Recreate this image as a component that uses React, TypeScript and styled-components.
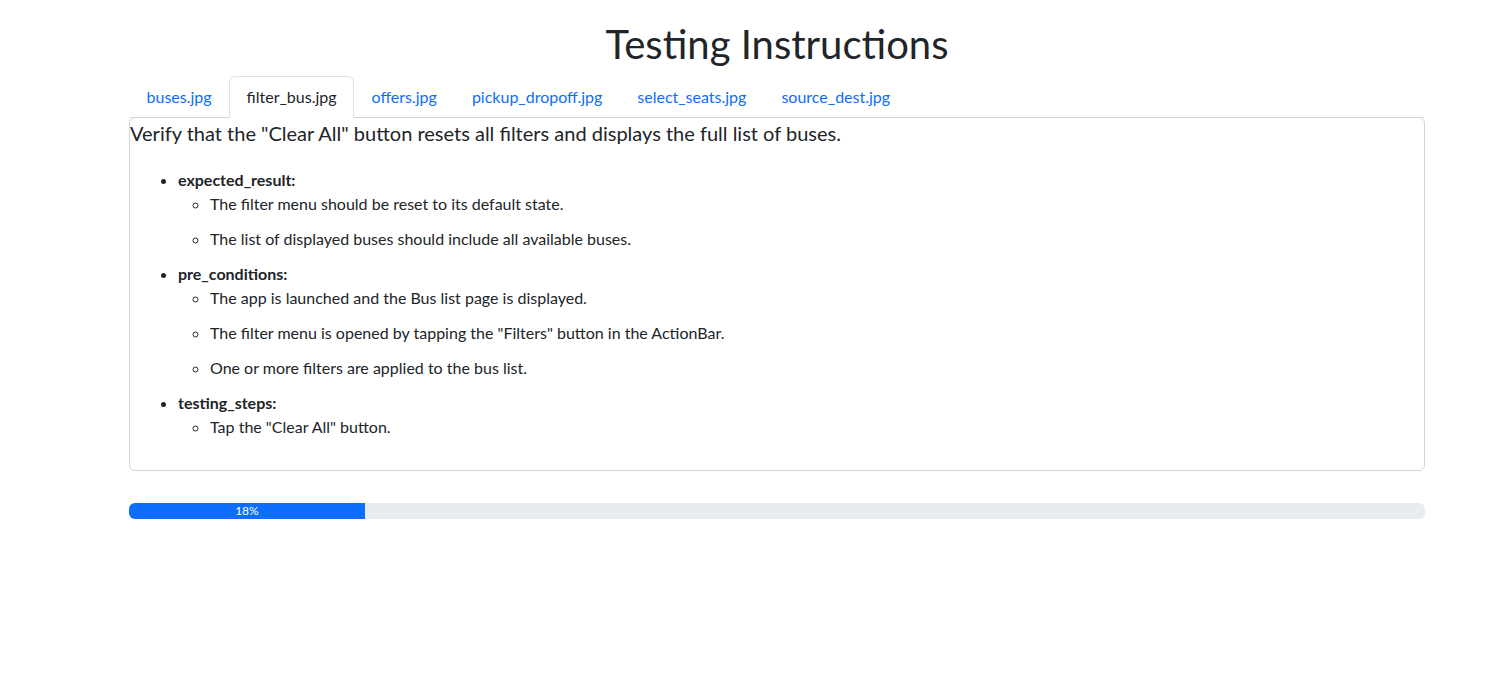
import React from "react";
import styled, { createGlobalStyle } from "styled-components";

const GlobalStyle = createGlobalStyle`
  body {
    margin: 0;
    background: #fff;
    color: #212529;
    font-family: Lato, "Noto Sans", sans-serif;
    font-size: 16px;
    line-height: 1.5;
  }
`;

const Container = styled.div`
  width: 1296px;
  margin-left: 129px;
`;

const Title = styled.h1`
  margin: 20px 0 8px;
  text-align: center;
  font-size: 40px;
  font-weight: 400;
  line-height: 1.2;
`;

const Tabs = styled.ul`
  display: flex;
  list-style: none;
  margin: 0;
  padding: 0;
  border-bottom: 1px solid #dee2e6;
`;

const Tab = styled.li<{ $active?: boolean }>`
  margin-bottom: -1px;
  padding: 8px 16.5px;
  border: 1px solid ${(p) => (p.$active ? "#dee2e6" : "transparent")};
  border-bottom-color: ${(p) => (p.$active ? "#fff" : "transparent")};
  border-radius: 6px 6px 0 0;
  background: ${(p) => (p.$active ? "#fff" : "transparent")};
  color: ${(p) => (p.$active ? "#212529" : "#0d6efd")};
  cursor: pointer;
`;

const Panel = styled.div`
  margin-top: -1px;
  border: 1px solid #d4d4d4;
  border-radius: 6px;
  padding-bottom: 20px;
`;

const Lead = styled.p`
  margin: 0 0 20px;
  font-size: 20px;
`;

const List = styled.ul`
  margin: 0;
  padding-left: 48px;
`;

const Item = styled.li`
  margin-bottom: 10px;
`;

const Label = styled.strong`
  font-weight: 700;
`;

const SubList = styled.ul`
  margin: 0;
  padding-left: 32px;
  list-style: circle;
`;

const SubItem = styled.li`
  margin-bottom: 11px;
`;

const Progress = styled.div`
  display: flex;
  height: 16px;
  margin-top: 32px;
  border-radius: 6px;
  background: #e9ecef;
  overflow: hidden;
  font-size: 12px;
`;

const Bar = styled.div`
  display: flex;
  align-items: center;
  justify-content: center;
  background: #0d6efd;
  color: #fff;
`;

const tabs = [
  "buses.jpg",
  "filter_bus.jpg",
  "offers.jpg",
  "pickup_dropoff.jpg",
  "select_seats.jpg",
  "source_dest.jpg",
];

const sections = [
  {
    key: "expected_result",
    items: [
      "The filter menu should be reset to its default state.",
      "The list of displayed buses should include all available buses.",
    ],
  },
  {
    key: "pre_conditions",
    items: [
      "The app is launched and the Bus list page is displayed.",
      'The filter menu is opened by tapping the "Filters" button in the ActionBar.',
      "One or more filters are applied to the bus list.",
    ],
  },
  {
    key: "testing_steps",
    items: ['Tap the "Clear All" button.'],
  },
];

const progress = 18.2;

export default function App() {
  return (
    <>
      <GlobalStyle />
      <Container>
        <Title>Testing Instructions</Title>
        <Tabs>
          {tabs.map((t) => (
            <Tab key={t} $active={t === "filter_bus.jpg"}>
              {t}
            </Tab>
          ))}
        </Tabs>
        <Panel>
          <Lead>
            Verify that the "Clear All" button resets all filters and displays
            the full list of buses.
          </Lead>
          <List>
            {sections.map((s) => (
              <Item key={s.key}>
                <Label>{s.key}:</Label>
                <SubList>
                  {s.items.map((i) => (
                    <SubItem key={i}>{i}</SubItem>
                  ))}
                </SubList>
              </Item>
            ))}
          </List>
        </Panel>
        <Progress>
          <Bar style={{ width: `${progress}%` }}>{Math.round(progress)}%</Bar>
        </Progress>
      </Container>
    </>
  );
}
